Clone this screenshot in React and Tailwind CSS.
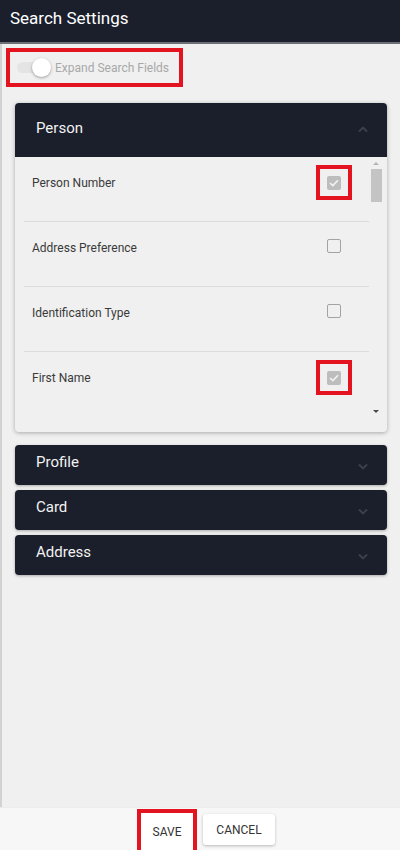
import React from "react";

const rows = [
  { label: "Person Number", checked: true },
  { label: "Address Preference", checked: false },
  { label: "Identification Type", checked: false },
  { label: "First Name", checked: true },
];

function Chevron({ up }) {
  return (
    <svg width="12" height="8" viewBox="0 0 12 8" fill="none">
      <path
        d={up ? "M2 6.5 L6 2.5 L10 6.5" : "M2 1.5 L6 5.5 L10 1.5"}
        stroke="#3c414d"
        strokeWidth="1.8"
      />
    </svg>
  );
}

function Checkbox({ checked }) {
  if (checked) {
    return (
      <div className="w-[14px] h-[14px] rounded-[2px] bg-[#bdbdbd] flex items-center justify-center">
        <svg width="10" height="8" viewBox="0 0 10 8" fill="none">
          <path d="M1 4 L3.8 6.6 L9 1.2" stroke="#f3f3f3" strokeWidth="1.6" />
        </svg>
      </div>
    );
  }
  return <div className="w-[14px] h-[14px] rounded-[2px] border-[1.5px] border-[#a3a3a3]" />;
}

function Collapsed({ title }) {
  return (
    <div className="h-[40px] bg-[#1b1f2b] rounded-[4px] shadow-[0_1px_3px_rgba(0,0,0,0.3)] flex justify-between pl-[21px] pr-[18px]">
      <span className="pt-[8px] text-[15px] leading-[18px] text-[#f2f2f2]">{title}</span>
      <div className="pt-[18px]">
        <Chevron />
      </div>
    </div>
  );
}

export default function App() {
  return (
    <div
      className="w-[400px] h-[850px] flex flex-col bg-[#f0f0f0]"
      style={{ fontFamily: "Roboto, 'Liberation Sans', sans-serif" }}
    >
      {/* Header */}
      <div className="h-[44px] bg-[#1b1f2b] border-b-2 border-[#6e7079] flex items-center pl-[10px] pb-[4px] shrink-0">
        <span className="text-[17px] text-white">Search Settings</span>
      </div>

      {/* Body */}
      <div className="flex-1 border-l-2 border-[#d2d2d2] flex flex-col">
        <div className="pl-[4px] pt-[4px]">
          <div className="w-[177px] h-[39px] border-4 border-[#e3141f] flex items-center pl-[7px]">
            <div className="relative w-[28px] h-[11px] rounded-full bg-[#e4e4e4] shrink-0">
              <div className="absolute right-[-6px] top-[-4px] w-[19px] h-[19px] rounded-full bg-white shadow-[0_1px_3px_rgba(0,0,0,0.35)]" />
            </div>
            <span className="ml-[10px] whitespace-nowrap text-[12px] text-[#a8a8a8]">Expand Search Fields</span>
          </div>
        </div>

        <div className="px-[13px] pt-[16px] flex flex-col">
          {/* Person panel */}
          <div className="rounded-[4px] shadow-[0_1px_4px_rgba(0,0,0,0.3)] bg-[#f0f0f0]">
            <div className="h-[54px] bg-[#1b1f2b] rounded-t-[4px] flex items-center justify-between pl-[21px] pr-[18px] pb-[3px]">
              <span className="text-[15px] text-[#f2f2f2]">Person</span>
              <Chevron up />
            </div>
            <div className="h-[275px] flex overflow-hidden">
              <div className="flex-1 pl-[9px]">
                {rows.map((r, i) => (
                  <div
                    key={r.label}
                    className={`h-[65px] flex justify-between pl-[8px] pr-[28px] ${i < 3 ? "border-b border-[#dcdcdc]" : ""}`}
                  >
                    <span className="pt-[18px] text-[12px] leading-[16px] text-[#3a3a3a]">{r.label}</span>
                    {r.checked ? (
                      <div className="mt-[8px] mr-[-11px] w-[36px] h-[35px] border-4 border-[#e3141f] flex items-center justify-center">
                        <Checkbox checked />
                      </div>
                    ) : (
                      <div className="mt-[17px]">
                        <Checkbox />
                      </div>
                    )}
                  </div>
                ))}
              </div>
              <div className="w-[14px] mr-[4px] flex flex-col items-center pt-[5px] pb-[19px]">
                <div className="w-0 h-0 border-l-[3px] border-r-[3px] border-b-[3px] border-l-transparent border-r-transparent border-b-[#b5b5b5]" />
                <div className="mt-[4px] w-[11px] h-[33px] bg-[#c4c4c4]" />
                <div className="flex-1" />
                <div className="w-0 h-0 border-l-[3.5px] border-r-[3.5px] border-t-[3.5px] border-l-transparent border-r-transparent border-t-[#4a4a4a]" />
              </div>
            </div>
          </div>

          <div className="mt-[13px] flex flex-col gap-[5px]">
            <Collapsed title="Profile" />
            <Collapsed title="Card" />
            <Collapsed title="Address" />
          </div>
        </div>
      </div>

      {/* Footer */}
      <div className="h-[43px] shrink-0 bg-[#f7f7f7] border-t border-[#ececec] flex items-end pl-[137px]">
        <div className="w-[60px] h-[41px] border-4 border-b-0 border-[#e3141f] bg-white flex items-center justify-center">
          <span className="text-[12px] text-[#333]">SAVE</span>
        </div>
        <div className="ml-[6px] mb-[5px] w-[72px] h-[31px] bg-white rounded-[3px] shadow-[0_1px_3px_rgba(0,0,0,0.25)] flex items-center justify-center">
          <span className="text-[12px] text-[#333]">CANCEL</span>
        </div>
      </div>
    </div>
  );
}
